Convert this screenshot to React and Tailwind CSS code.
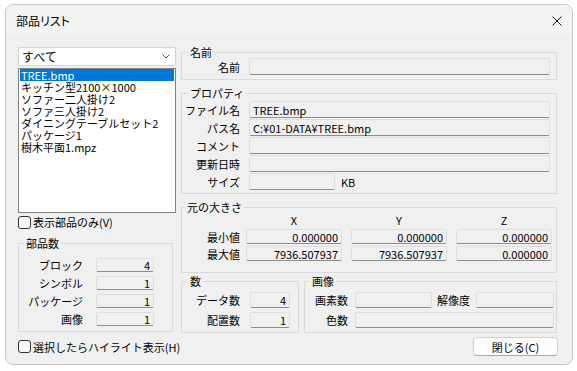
import React from "react";

const FIELD =
  "flex items-center border border-[#dedede] border-b-[#8c8c8c] rounded-[2px] bg-[#f0f0f0] whitespace-nowrap";

function Field({ className = "", right = false, children }) {
  return (
    <div
      className={`${FIELD} ${right ? "justify-end pr-[3px]" : "pl-[3px]"} ${className}`}
    >
      {children}
    </div>
  );
}

function Group({ label, className = "", legendClass = "ml-[6px]", children }) {
  return (
    <fieldset className={`min-w-0 border border-[#dadada] ${className}`}>
      <legend className={`${legendClass} px-[2px] leading-[12px]`}>{label}</legend>
      {children}
    </fieldset>
  );
}

function Check({ label }) {
  return (
    <div className="flex items-center h-[14px]">
      <div className="w-[13px] h-[13px] border border-[#333333] rounded-[3px] bg-[#f8f8f8]" />
      <span className="ml-[2px] leading-[14px]">{label}</span>
    </div>
  );
}

const ITEMS = [
  "キッチン型2100×1000",
  "ソファー二人掛け2",
  "ソファ三人掛け2",
  "ダイニングテーブルセット2",
  "パッケージ1",
  "樹木平面1.mpz",
];

export default function App() {
  return (
    <div className="w-[577px] h-[371px] bg-white pl-[5px] pt-[4px] font-['Noto_Sans_CJK_JP',sans-serif] text-[11px] leading-[12px] text-black">
      <div className="w-[568px] h-[361px] border border-[#c6c6c6] rounded-[8px] overflow-hidden flex flex-col bg-[#f0f0f0]">
        {/* title bar */}
        <div className="h-[31px] shrink-0 bg-[#f3f3f3] flex items-center justify-between pl-[10px] pr-[10px]">
          <span className="text-[12px] leading-[14px] [font-feature-settings:'palt']">部品リスト</span>
          <svg width="10" height="10" viewBox="0 0 10 10">
            <path d="M0.5 0.5L9.5 9.5M9.5 0.5L0.5 9.5" stroke="#1b1b1b" strokeWidth="1" />
          </svg>
        </div>

        {/* body */}
        <div className="flex-1 flex flex-col pl-[12px] pr-[14px] pt-[10px]">
          <div className="flex gap-[5px]">
            {/* left column */}
            <div className="w-[158px] flex flex-col">
              <div className="mt-[1px] h-[19px] bg-white border border-[#d4d4d4] rounded-[2px] flex items-center justify-between pl-[3px] pr-[5px]">
                <span className="text-[12px]">すべて</span>
                <svg width="8" height="5" viewBox="0 0 8 5">
                  <path d="M0.5 0.5L4 4L7.5 0.5" fill="none" stroke="#555555" strokeWidth="1" />
                </svg>
              </div>
              <div className="mt-[2px] h-[145px] bg-white border border-[#828282] flex flex-col">
                <div className="mx-[1px] pl-[1px] h-[12px] bg-[#0078d7] text-white whitespace-nowrap">
                  TREE.bmp
                </div>
                {ITEMS.map((t) => (
                  <div key={t} className="pl-[2px] h-[12px] whitespace-nowrap">
                    {t}
                  </div>
                ))}
              </div>
              <div className="mt-[2px]">
                <Check label="表示部品のみ(V)" />
              </div>
              <Group label="部品数" className="mt-[8px] w-[155px]" legendClass="ml-[5px]">
                <div className="pt-[9px] pb-[5px] flex flex-col gap-[4px]">
                  {[
                    ["ブロック", "4"],
                    ["シンボル", "1"],
                    ["パッケージ", "1"],
                    ["画像", "1"],
                  ].map(([l, v]) => (
                    <div key={l} className="flex items-center">
                      <span className="w-[64px] text-right">{l}</span>
                      <Field right className="ml-[13px] w-[58px] h-[14px]">
                        {v}
                      </Field>
                    </div>
                  ))}
                </div>
              </Group>
            </div>

            {/* right column */}
            <div className="w-[376px] flex flex-col">
              <Group label="名前">
                <div className="pb-[4px] flex items-center">
                  <span className="w-[58px] text-right">名前</span>
                  <Field className="ml-[9px] w-[301px] h-[17px]" />
                </div>
              </Group>

              <Group label="プロパティ" className="mt-[7px]">
                <div className="pt-[2px] pb-[3px] flex flex-col gap-[1px]">
                  {[
                    ["ファイル名", "TREE.bmp"],
                    ["パス名", "C:¥01-DATA¥TREE.bmp"],
                    ["コメント", ""],
                    ["更新日時", ""],
                  ].map(([l, v]) => (
                    <div key={l} className="flex items-center">
                      <span className="w-[58px] text-right">{l}</span>
                      <Field className="ml-[9px] w-[301px] h-[17px]">{v}</Field>
                    </div>
                  ))}
                  <div className="flex items-center">
                    <span className="w-[58px] text-right">サイズ</span>
                    <Field className="ml-[9px] w-[86px] h-[17px]" />
                    <span className="ml-[6px]">KB</span>
                  </div>
                </div>
              </Group>

              <Group label="元の大きさ" className="mt-[7px]" legendClass="ml-[3px]">
                <div className="pb-[11px] flex flex-col">
                  <div className="flex h-[13px] items-center">
                    <span className="w-[64px]" />
                    <span className="w-[96px] text-center">X</span>
                    <span className="ml-[9px] w-[96px] text-center">Y</span>
                    <span className="ml-[9px] w-[96px] text-center">Z</span>
                  </div>
                  <div className="mt-[3px] flex flex-col gap-[2px]">
                    {[
                      ["最小値", "0.000000", "0.000000", "0.000000"],
                      ["最大値", "7936.507937", "7936.507937", "0.000000"],
                    ].map(([l, x, y, z]) => (
                      <div key={l} className="flex items-center">
                        <span className="w-[58px] text-right">{l}</span>
                        <Field right className="ml-[6px] w-[96px] h-[15px]">{x}</Field>
                        <Field right className="ml-[9px] w-[96px] h-[15px]">{y}</Field>
                        <Field right className="ml-[9px] w-[96px] h-[15px]">{z}</Field>
                      </div>
                    ))}
                  </div>
                </div>
              </Group>

              <div className="mt-[2px] flex gap-[5px]">
                <Group label="数" className="w-[118px]">
                  <div className="pt-[5px] pb-[4px] flex flex-col gap-[4px]">
                    {[
                      ["データ数", "4"],
                      ["配置数", "1"],
                    ].map(([l, v]) => (
                      <div key={l} className="flex items-center">
                        <span className="w-[58px] text-right">{l}</span>
                        <Field right className="ml-[10px] w-[40px] h-[16px]">{v}</Field>
                      </div>
                    ))}
                  </div>
                </Group>
                <Group label="画像" className="w-[253px]" legendClass="ml-[5px]">
                  <div className="pt-[5px] pb-[4px] flex flex-col gap-[4px]">
                    <div className="flex items-center">
                      <span className="w-[43px] text-right">画素数</span>
                      <Field className="ml-[7px] w-[77px] h-[16px]" />
                      <span className="ml-[5px] w-[37px]">解像度</span>
                      <Field className="ml-[2px] w-[78px] h-[16px]" />
                    </div>
                    <div className="flex items-center">
                      <span className="w-[43px] text-right">色数</span>
                      <Field className="ml-[7px] w-[199px] h-[16px]" />
                    </div>
                  </div>
                </Group>
              </div>
            </div>
          </div>

          {/* bottom row */}
          <div className="mt-[4px] h-[19px] flex items-center justify-between">
            <Check label="選択したらハイライト表示(H)" />
            <div className="w-[85px] h-[19px] bg-[#fdfdfd] border border-[#d0d0d0] border-b-[#a8a8a8] rounded-[4px] flex items-center justify-center">
              閉じる(C)
            </div>
          </div>
        </div>
      </div>
    </div>
  );
}
